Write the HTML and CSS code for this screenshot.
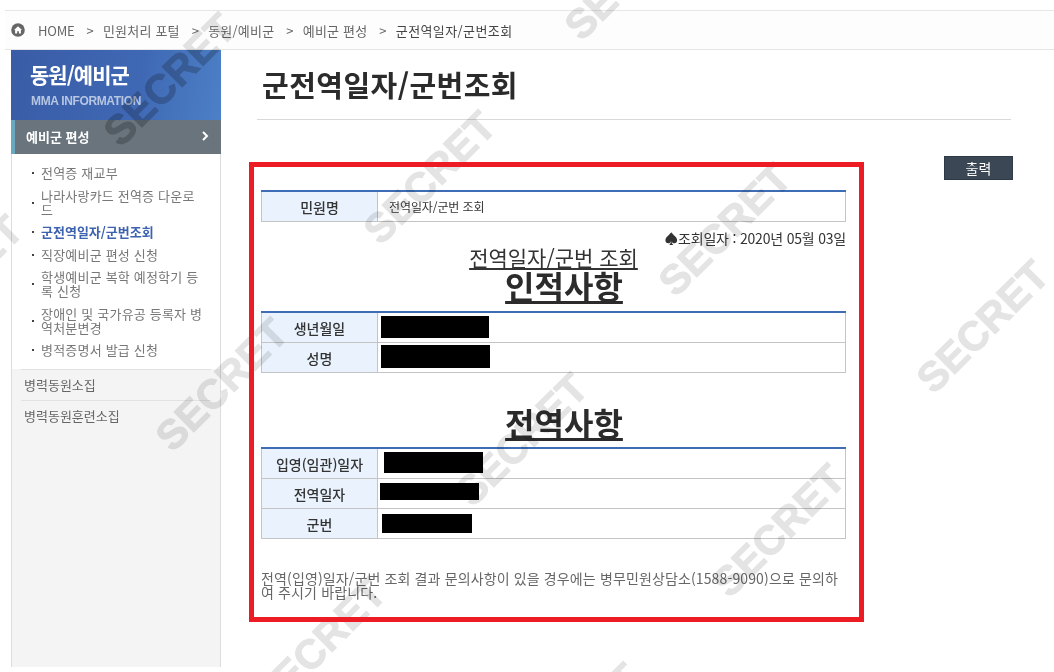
FILE: index.html
```html
<!DOCTYPE html>
<html lang="ko">
<head>
    <meta charset="UTF-8">
    <meta name="viewport" content="width=device-width, initial-scale=1.0">
    <title>군전역일자/군번조회</title>
    <link rel="stylesheet" href="styles.css">
</head>
<body>
    <div class="breadcrumb">
        <svg class="home-icon" width="14" height="14" viewBox="0 0 14 14">
            <circle cx="7" cy="7" r="6.8" fill="#666"></circle>
            <path d="M7 3.2 L11 6.9 H9.9 V10.4 H7.9 V8.2 H6.1 V10.4 H4.1 V6.9 H3 Z" fill="#fff"></path>
        </svg>
        <span class="home">HOME</span>
        <span class="sep">&gt;</span>
        <span>민원처리 포털</span>
        <span class="sep">&gt;</span>
        <span>동원/예비군</span>
        <span class="sep">&gt;</span>
        <span>예비군 편성</span>
        <span class="sep">&gt;</span>
        <span class="current">군전역일자/군번조회</span>
    </div>

    <div class="wrap">
        <div class="sidebar">
            <div class="side-top">
                <div class="side-head">
                    <h2>동원/예비군</h2>
                    <p>MMA INFORMATION</p>
                </div>
                <div class="side-active">
                    <span>예비군 편성</span>
                    <svg width="8" height="12" viewBox="0 0 8 12">
                        <path d="M2 2 L6 6 L2 10" fill="none" stroke="#fff" stroke-width="2"></path>
                    </svg>
                </div>
            </div>
            <ul class="side-list">
                <li>전역증 재교부</li>
                <li>나라사랑카드 전역증 다운로드</li>
                <li class="on">군전역일자/군번조회</li>
                <li>직장예비군 편성 신청</li>
                <li>학생예비군 복학 예정학기 등록 신청</li>
                <li>장애인 및 국가유공 등록자 병역처분변경</li>
                <li>병적증명서 발급 신청</li>
            </ul>
            <div class="side-rest">
                <div class="side-link">병력동원소집</div>
                <div class="side-link">병력동원훈련소집</div>
            </div>
        </div>

        <div class="content">
            <h1>군전역일자/군번조회</h1>
            <div class="print-row">
                <button class="print-btn">출력</button>
            </div>
            <div class="report">
                <table>
                    <tr>
                        <th>민원명</th>
                        <td class="small">전역일자/군번 조회</td>
                    </tr>
                </table>
                <p class="query-date">♠조회일자 : 2020년 05월 03일</p>
                <p class="report-title">전역일자/군번 조회</p>
                <h3 class="first">인적사항</h3>
                <table>
                    <tr>
                        <th>생년월일</th>
                        <td><div class="redact r1"></div></td>
                    </tr>
                    <tr>
                        <th>성명</th>
                        <td><div class="redact r2"></div></td>
                    </tr>
                </table>
                <h3 class="second">전역사항</h3>
                <table>
                    <tr>
                        <th>입영(임관)일자</th>
                        <td><div class="redact r3"></div></td>
                    </tr>
                    <tr>
                        <th>전역일자</th>
                        <td><div class="redact r4"></div></td>
                    </tr>
                    <tr>
                        <th>군번</th>
                        <td><div class="redact r5"></div></td>
                    </tr>
                </table>
                <p class="note">전역(입영)일자/군번 조회 결과 문의사항이 있을 경우에는 병무민원상담소(1588-9090)으로 문의하여 주시기 바랍니다.</p>
            </div>
        </div>
    </div>

    <!-- 워터마크 -->
    <div class="watermarks">
        <span class="wm a">SECRET</span>
        <span class="wm b">SECRET</span>
        <span class="wm c">SECRET</span>
        <span class="wm d">SECRET</span>
        <span class="wm e">SECRET</span>
        <span class="wm f">SECRET</span>
        <span class="wm g">SECRET</span>
        <span class="wm h">SECRET</span>
        <span class="wm i">SECRET</span>
        <span class="wm j">SECRET</span>
        <span class="wm k">SECRET</span>
    </div>

    <div class="red-box"></div>
</body>
</html>
```

FILE: styles.css
```css
html, body {
    height: 672px;
    overflow: hidden;
}

body {
    margin: 0;
    position: relative;
    background-color: #fff;
    color: #333;
    font-family: "Noto Sans CJK KR", "Noto Sans", sans-serif;
    font-size: 13px;
}

/* breadcrumb */
.breadcrumb {
    display: flex;
    align-items: center;
    height: 38px;
    margin: 10px 0 0 5px;
    padding-left: 6px;
    background-color: #fdfdfd;
    border-top: 1px solid #e6e6e6;
    border-bottom: 1px solid #e6e6e6;
    color: #666;
    font-size: 13px;
    letter-spacing: 0.2px;
}

.home-icon {
    margin-right: 13px;
}

.home {
    letter-spacing: -0.2px;
}

.sep {
    margin: 0 9px 0 12px;
}

.current {
    color: #444;
    letter-spacing: 0.4px;
}

.wrap {
    display: flex;
}

/* sidebar */
.sidebar {
    display: flex;
    flex-direction: column;
    width: 210px;
    height: 617px;
    margin-left: 11px;
}

/* 사이드 상단은 워터마크가 더 진하게 보임 */
.side-top {
    position: relative;
    overflow: hidden;
}

.side-top::after {
    content: "SECRET";
    position: absolute;
    left: 159px;
    top: 30px;
    transform: translate(-50%, -50%) rotate(-45deg);
    color: #e2e2e2;
    -webkit-text-stroke: 1px #e2e2e2;
    font-family: "Liberation Sans", sans-serif;
    font-size: 41px;
    line-height: 1;
    font-weight: 700;
    mix-blend-mode: multiply;
}

.side-head {
    height: 70px;
    box-sizing: border-box;
    padding: 9px 0 0 19px;
    background: linear-gradient(100deg, #3a5ca6 0%, #3f68b4 60%, #4c80c6 100%);
}

.side-head h2 {
    margin: 0;
    color: #fff;
    font-size: 21px;
    line-height: 30px;
    font-weight: 700;
    letter-spacing: -1px;
}

.side-head p {
    margin: 4px 0 0 1px;
    color: #b6c6e2;
    font-family: "Liberation Sans", sans-serif;
    font-size: 12px;
    line-height: 16px;
    font-weight: 700;
    letter-spacing: -0.35px;
}

.side-active {
    display: flex;
    align-items: center;
    justify-content: space-between;
    height: 32px;
    padding: 0 12px 2px 11px;
    background-color: #69747c;
    border-left: 4px solid #6aa8c0;
    color: #fff;
    font-size: 13px;
    font-weight: 700;
}

.side-list {
    flex: none;
    margin: 0;
    padding: 12px 15px 12px 20px;
    list-style: none;
    background-color: #fff;
    border-left: 1px solid #ddd;
    border-right: 1px solid #ddd;
    color: #777;
    font-size: 13px;
    line-height: 14px;
    letter-spacing: 0.2px;
    word-break: break-all;
}

.side-list li {
    display: flex;
    align-items: center;
    margin-bottom: 8.5px;
}

.side-list li::before {
    content: "";
    flex: none;
    width: 2px;
    height: 2px;
    margin-right: 7px;
    background-color: #444;
}

.side-list li:last-child {
    margin-bottom: 0;
}

.side-list .on {
    color: #3d63b0;
    font-weight: 700;
    letter-spacing: 0;
}

.side-rest {
    flex: 1;
    padding: 0 9px;
    background-color: #f4f4f4;
    border-left: 1px solid #ddd;
    border-right: 1px solid #ddd;
    color: #666;
}

.side-link {
    height: 30px;
    line-height: 30px;
    padding-left: 3px;
    border-top: 1px solid #e2e2e2;
}

/* content */
.content {
    width: 754px;
    margin-left: 36px;
}

.content h1 {
    height: 70px;
    box-sizing: border-box;
    margin: 0;
    padding: 12px 0 0 5px;
    border-bottom: 1px solid #d9d9d9;
    color: #2b2b2b;
    font-size: 29px;
    line-height: 44px;
    font-weight: 700;
    letter-spacing: 0.45px;
}

.print-row {
    display: flex;
    justify-content: flex-end;
    height: 36px;
    padding-top: 36px;
    margin-right: -2px;
}

.print-btn {
    width: 69px;
    height: 24px;
    padding: 0;
    background-color: #3b4754;
    border: 1px solid #2e3a46;
    color: #fff;
    font-family: inherit;
    font-size: 14px;
    line-height: 20px;
}

.report {
    width: 585px;
    margin: -2px 0 0 4px;
}

table {
    width: 585px;
    border-collapse: collapse;
    table-layout: fixed;
    border-top: 2px solid #3f6db5;
}

th, td {
    height: 29px;
    padding: 0;
    border: 1px solid #c4c4c4;
}

tr:first-child th, tr:first-child td {
    border-top: none;
}

th {
    width: 115px;
    background-color: #e9f2fd;
    color: #333;
    font-size: 14px;
    font-weight: 500;
}

td.small {
    padding-left: 11px;
    font-size: 12px;
    letter-spacing: -0.1px;
}

.query-date {
    margin: 7px 0 0;
    color: #333;
    font-size: 14px;
    line-height: 18px;
    text-align: right;
    letter-spacing: -0.2px;
}

.report-title {
    margin: 0;
    font-size: 21px;
    line-height: 21px;
    text-align: center;
    text-decoration: underline;
}

.report h3 {
    margin: 0;
    padding-left: 21px;
    color: #2b2b2b;
    font-size: 32px;
    line-height: 34px;
    font-weight: 700;
    text-align: center;
    text-decoration: underline;
}

.report h3.first {
    margin-bottom: 9px;
}

.report h3.second {
    margin: 32px 0 8px;
}

/* 가림 처리 */
.redact {
    position: relative;
    z-index: 3;
    background-color: #000;
}

.r1 { width: 108px; height: 22px; margin: 0 0 1px 3px; }
.r2 { width: 109px; height: 23px; margin: 0 0 2px 3px; }
.r3 { width: 99px; height: 21px; margin: 0 0 2px 6px; }
.r4 { width: 99px; height: 17px; margin: 0 0 4px 2px; }
.r5 { width: 90px; height: 19px; margin: 0 0 0 4px; }

.note {
    margin: 32px 0 0;
    color: #666;
    font-size: 14px;
    line-height: 14px;
    letter-spacing: 0.13px;
    word-break: break-all;
}

/* watermark */
.watermarks {
    position: absolute;
    top: 0;
    left: 0;
    width: 1054px;
    height: 672px;
    overflow: hidden;
    pointer-events: none;
    z-index: 2;
    mix-blend-mode: multiply;
}

.wm {
    position: absolute;
    transform: translate(-50%, -50%) rotate(-45deg);
    color: #e4e4e4;
    -webkit-text-stroke: 1px #e4e4e4;
    font-family: "Liberation Sans", sans-serif;
    font-size: 41px;
    line-height: 1;
    font-weight: 700;
}

.a { left: 170px; top: 80px; }
.b { left: 430px; top: 178px; }
.c { left: 631px; top: -26px; }
.d { left: 725px; top: 230px; }
.e { left: 983px; top: 327px; }
.f { left: 222px; top: 385px; }
.g { left: 522px; top: 440px; }
.h { left: 779px; top: 531px; }
.i { left: -43px; top: 282px; }
.j { left: 320px; top: 645px; }
.k { left: 575px; top: 730px; }

/* annotation */
.red-box {
    position: absolute;
    top: 162px;
    left: 249px;
    width: 605px;
    height: 450px;
    border: 5px solid #ed1c24;
    z-index: 3;
}
```
